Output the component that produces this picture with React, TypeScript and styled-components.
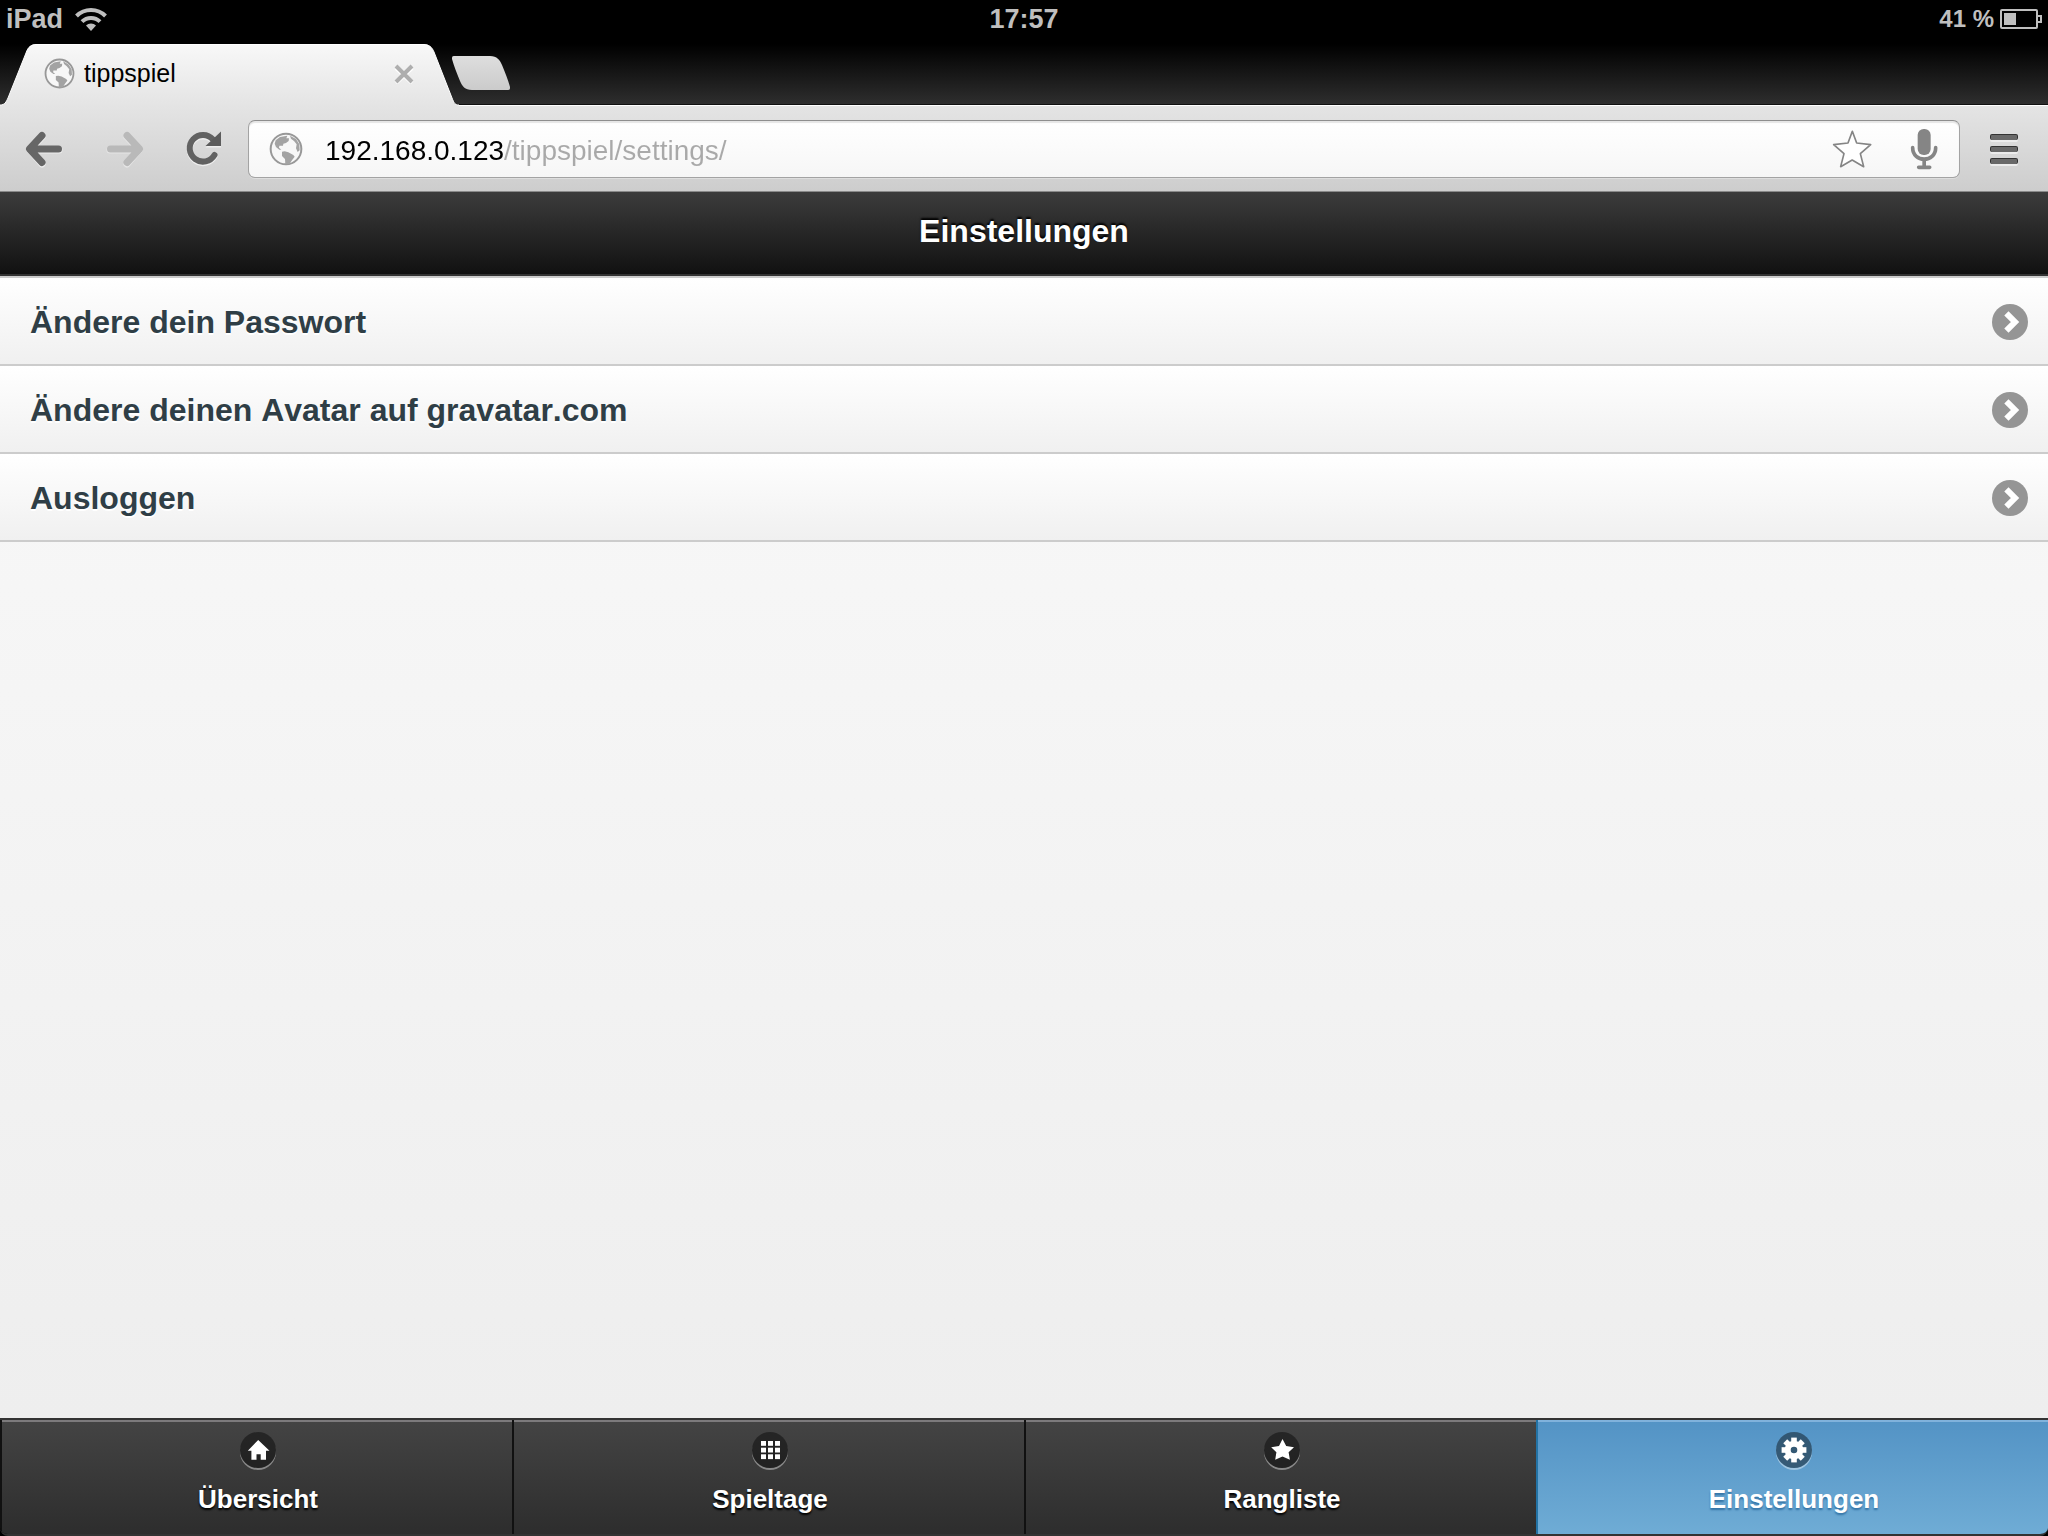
import React from "react";
import styled, { createGlobalStyle } from "styled-components";

const GlobalStyle = createGlobalStyle`
  *, *::before, *::after { box-sizing: border-box; }
  html, body { margin: 0; padding: 0; background: #000; }
  body {
    font-family: "Liberation Sans", Arial, Helvetica, sans-serif;
    font-kerning: none;
  }
  h1, ul { margin: 0; padding: 0; }
  button { margin: 0; padding: 0; border: 0; background: none; font: inherit; }
  a { text-decoration: none; }
  svg { display: block; flex: none; }
`;

const Page = styled.div`
  display: flex;
  flex-direction: column;
  min-height: 100vh;
  background: #000;
`;

const StatusBar = styled.div`
  display: grid;
  grid-template-columns: 1fr auto 1fr;
  align-items: center;
  height: 38px;
  padding: 0 6px;
  background: #000;
  color: #bfbfbf;
  font-size: 27px;
  font-weight: bold;
`;

const StatusGroup = styled.div<{ $end?: boolean }>`
  display: flex;
  align-items: center;
  justify-content: ${(p) => (p.$end ? "flex-end" : "flex-start")};
  gap: ${(p) => (p.$end ? "6px" : "12px")};
`;

const BatteryText = styled.span`
  font-size: 24px;
`;

const TabStrip = styled.div`
  display: flex;
  align-items: flex-start;
  height: 67px;
  padding-top: 6px;
  background: linear-gradient(#000 6px, #2e2e2e 66px, #111 66px);
`;

const Tab = styled.div`
  position: relative;
  display: flex;
  align-items: center;
  width: 458px;
  height: 61px;
  padding: 0 42px 3px 44px;
`;

const TabShape = styled.svg`
  position: absolute;
  left: 0;
  top: 0;
`;

const TabLink = styled.a`
  position: relative;
  display: flex;
  flex: 1;
  align-items: center;
  gap: 9px;
  color: #000;
  font-size: 25px;
`;

const TabClose = styled.button`
  position: relative;
  padding: 2px 2px 0 0;
`;

const NewTab = styled.button`
  margin: 11px 0 0 -8px;
`;

const Toolbar = styled.div`
  display: flex;
  align-items: center;
  padding: 14px 0 13px 4px;
  border-top: 1px solid #fff;
  border-bottom: 1px solid #8a8a8a;
  background: linear-gradient(#e4e4e4, #cdcdcd);
`;

const ToolButton = styled.button<{ $wide?: boolean }>`
  display: flex;
  align-items: center;
  justify-content: center;
  width: ${(p) => (p.$wide ? "88px" : "80px")};
  height: 58px;
`;

const Omnibox = styled.form`
  display: flex;
  flex: 1;
  align-items: center;
  height: 58px;
  margin-left: 4px;
  padding-left: 20px;
  border: 1px solid #a3a3a3;
  border-top-color: #8e8e8e;
  border-radius: 7px;
  background: linear-gradient(#fff, #f6f6f6);
  box-shadow: inset 0 2px 1px #e6e6e6, 0 1px 0 #dedede;
`;

const UrlInput = styled.input`
  flex: 1;
  min-width: 0;
  margin-left: 22px;
  padding: 4px 0 0;
  border: 0;
  outline: 0;
  color: #000;
  font-family: inherit;
  font-size: 28px;
  line-height: 40px;
  background: linear-gradient(90deg, #000 179px, #a9a9a9 179px);
  background-clip: text;
  -webkit-background-clip: text;
  -webkit-text-fill-color: transparent;
`;

const OmniButton = styled.button`
  display: flex;
  align-items: center;
  justify-content: center;
  width: 72px;
  height: 56px;
  padding-left: 2px;
`;

const Header = styled.header`
  padding: 20px 30px 24px;
  border-bottom: 2px solid #333;
  background: linear-gradient(#3c3c3c, #111);
`;

const Title = styled.h1`
  color: #fff;
  font-size: 32px;
  line-height: 38px;
  text-align: center;
  text-shadow: 0 -2px 2px #000;
`;

const Content = styled.main`
  flex: 1;
  background: linear-gradient(#f9f9f9, #eeeeee);
`;

const List = styled.ul`
  list-style: none;
  border-top: 2px solid #ccc;
`;

const Item = styled.li`
  border-bottom: 2px solid #ccc;
  background: linear-gradient(#fff, #f0f0f0);
`;

const ItemLink = styled.a`
  display: flex;
  align-items: center;
  justify-content: space-between;
  padding: 24px 20px 22px 30px;
  color: #2f3e46;
  font-size: 32px;
  font-weight: bold;
  line-height: 40px;
  text-shadow: 0 2px 0 #fff;
`;

const Footer = styled.footer`
  overflow: hidden;
  border: solid #333;
  border-width: 2px 0;
  border-radius: 0 0 8px 8px;
`;

const NavBar = styled.nav`
  display: grid;
  grid-template-columns: repeat(4, 1fr);
`;

const NavLink = styled.a<{ $active?: boolean }>`
  display: flex;
  flex-direction: column;
  align-items: center;
  gap: 15px;
  padding: 12px 0 19px 2px;
  border-left: 2px solid ${(p) => (p.$active ? "#2373a5" : "#111")};
  background: ${(p) =>
    p.$active
      ? "linear-gradient(#5393c5, #6facd5)"
      : "linear-gradient(#444, #2d2d2d)"};
  box-shadow: inset 0 2px 0 ${(p) => (p.$active ? "#80b2dc" : "#7c7a7c")};
  color: #fff;
  font-size: 26px;
  font-weight: bold;
  line-height: 32px;
  text-shadow: 0 2px 2px ${(p) => (p.$active ? "#3373a5" : "#000")};
`;

const NavIcon = styled.span`
  width: 36px;
  height: 36px;
  border-radius: 50%;
  background: rgba(0, 0, 0, 0.42);
  box-shadow: 0 2px 0 rgba(255, 255, 255, 0.4);
`;

const Globe = ({ size }: { size: number }) => (
  <svg width={size} height={size} viewBox="777 67 102 102" aria-hidden="true">
    <circle cx="828" cy="118" r="46" fill="#f7f7f7" stroke="#989898" strokeWidth="6" />
    <path fill="#a3a3a3" d="M797 92 L810 82 L832 78 L829 86 L837 86 L836 94 L828 100 L820 102 L819 108 L808 108 L807 114 L814 120 L808 120 L798 112 L794 102 Z" />
    <path fill="#a3a3a3" d="M816 126 L824 125 L835 128 L850 136 L854 141 L846 152 L838 164 L826 164 L825 148 L816 139 Z" />
    <path fill="#a3a3a3" d="M840 78 L858 88 L868 104 L869 122 L863 127 L858 116 L860 104 L852 94 L843 87 Z" />
  </svg>
);

const WifiIcon = () => (
  <svg width="32" height="24" viewBox="0 0 32 24" aria-hidden="true">
    <g fill="none" stroke="#bfbfbf" strokeWidth="4">
      <path d="M1.5 9 A20.5 20.5 0 0 1 30.5 9" />
      <path d="M7 14.7 A12.8 12.8 0 0 1 25 14.7" />
    </g>
    <path d="M16 24 L11 18.6 A7 7 0 0 1 21 18.6 Z" fill="#bfbfbf" />
  </svg>
);

const BatteryIcon = () => (
  <svg width="42" height="20" viewBox="0 0 42 20" aria-hidden="true">
    <rect x="1" y="1" width="36" height="18" rx="1" fill="none" stroke="#bfbfbf" strokeWidth="2" />
    <rect x="4" y="4" width="12" height="12" fill="#bfbfbf" />
    <path d="M38 7 H41 V13 H38" fill="none" stroke="#bfbfbf" strokeWidth="2" />
  </svg>
);

const Chevron = () => (
  <svg width="36" height="36" viewBox="0 0 36 36" aria-hidden="true">
    <circle cx="18" cy="18" r="18" fill="#959595" />
    <path d="M14.4 9.4 L23 18 L14.4 26.6" fill="none" stroke="#fff" strokeWidth="6" />
  </svg>
);

type IconName = "home" | "grid" | "star" | "gear";

const glyphs: Record<IconName, React.ReactNode> = {
  home: <path d="M18.2 8 L29.500 18.800 H26 V27.700 H20.7 V22.3 H16.5 V27.700 H11.4 V18.800 H7.8 Z" />,
  grid: (
    <>
      {[9, 16, 23].map((x) =>
        [9, 15.7, 22.3].map((y) => <rect key={`${x}-${y}`} x={x} y={y} width="5" height="4.8" />)
      )}
    </>
  ),
  star: <path d="M18.5 7 L22.2 14 L30 15.2 L24.6 20.2 L25.9 27.8 L18.5 24.4 L11.2 27.8 L12.4 20.2 L7.2 15.2 L15 14 Z" />,
  gear: (
    <>
      <circle cx="18" cy="18" r="6.3" fill="none" stroke="#fff" strokeWidth="6" />
      {[0, 45, 90, 135, 180, 225, 270, 315].map((a) => (
        <rect key={a} x="15.2" y="5.6" width="5.6" height="5" transform={`rotate(${a} 18 18)`} />
      ))}
    </>
  ),
};

const settings = [
  { label: "Ändere dein Passwort", href: "#passwort" },
  { label: "Ändere deinen Avatar auf gravatar.com", href: "#avatar" },
  { label: "Ausloggen", href: "#logout" },
];

const sections: { label: string; icon: IconName; active?: boolean }[] = [
  { label: "Übersicht", icon: "home" },
  { label: "Spieltage", icon: "grid" },
  { label: "Rangliste", icon: "star" },
  { label: "Einstellungen", icon: "gear", active: true },
];

export default function App() {
  return (
    <Page>
      <GlobalStyle />
      <StatusBar>
        <StatusGroup>
          <span>iPad</span>
          <WifiIcon />
        </StatusGroup>
        <span>17:57</span>
        <StatusGroup $end>
          <BatteryText>41 %</BatteryText>
          <BatteryIcon />
        </StatusGroup>
      </StatusBar>

      <TabStrip>
        <Tab>
          <TabShape width="460" height="62" viewBox="0 0 460 62" aria-hidden="true">
            <defs>
              <linearGradient id="tabFill" x1="0" y1="0" x2="0" y2="1">
                <stop offset="0" stopColor="#f8f8f8" />
                <stop offset="1" stopColor="#e4e4e4" />
              </linearGradient>
            </defs>
            <path d="M0 62 V61 C5 61 6 58 8 54 L26 9 C28 3 31 0 37 0 H423 C429 0 432 3 434 8 L452 54 C454 59 455 61 459 61 V62 Z" fill="url(#tabFill)" />
            <path d="M0 61 C5 61 6 58 8 54 L26 9 C28 3 31 0.5 37 0.5 H423 C429 0.5 432 3 434 8 L452 54 C454 59 455 61 459 61" fill="none" stroke="#fff" />
          </TabShape>
          <TabLink href="#tippspiel">
            <Globe size={31} />
            tippspiel
          </TabLink>
          <TabClose type="button" aria-label="Tab schließen">
            <svg width="20" height="20" viewBox="0 0 20 20">
              <path d="M2 4 L18 19 M18 4 L2 19" stroke="#fff" strokeWidth="4" />
              <path d="M2 2 L18 18 M18 2 L2 18" stroke="#aeaeae" strokeWidth="4" />
            </svg>
          </TabClose>
        </Tab>
        <NewTab type="button" aria-label="Neuer Tab">
          <svg width="62" height="36" viewBox="0 0 62 36">
            <defs>
              <linearGradient id="newTabFill" x1="0" y1="0" x2="0" y2="1">
                <stop offset="0" stopColor="#dedede" />
                <stop offset="1" stopColor="#cbcbcb" />
              </linearGradient>
            </defs>
            <path d="M4 1 H40 C47 1 50 5 52 10 C55 17 58 25 60 32 C60 34 60 35 58 35 H22 C15 35 12 31 10 26 C7 19 4 11 2 4 C2 2 2 1 4 1 Z" fill="url(#newTabFill)" />
          </svg>
        </NewTab>
      </TabStrip>

      <Toolbar>
        <ToolButton type="button" aria-label="Zurück">
          <svg width="80" height="58" viewBox="4 120 80 58">
            <g fill="none" strokeWidth="7" strokeLinecap="round" strokeLinejoin="round">
              <path d="M42 137 L30 150 L42 164 M30 150 H59" stroke="#eee" />
              <path d="M42 135.5 L29.5 149 L42 162.5 M30 149 H58.5" stroke="#666" />
            </g>
          </svg>
        </ToolButton>
        <ToolButton type="button" aria-label="Vor">
          <svg width="80" height="58" viewBox="84 120 80 58">
            <g fill="none" strokeWidth="7" strokeLinecap="round" strokeLinejoin="round">
              <path d="M127 137 L139 150 L127 164 M139 150 H110" stroke="#e6e6e6" />
              <path d="M127 135.5 L139.5 149 L127 162.5 M139 149 H110.5" stroke="#b9b9b9" />
            </g>
          </svg>
        </ToolButton>
        <ToolButton type="button" aria-label="Neu laden">
          <svg width="80" height="58" viewBox="164 120 80 58">
            <g transform="translate(0 1.5)" stroke="#eee" fill="none">
              <path d="M214.5 155 A13.3 13.3 0 1 1 213 139.5" strokeWidth="6" strokeLinecap="round" />
              <path d="M221 132 V146 H205.5 Z" fill="#eee" stroke="none" />
            </g>
            <path d="M214.5 155 A13.3 13.3 0 1 1 213 139.5" fill="none" stroke="#626262" strokeWidth="6" strokeLinecap="round" />
            <path d="M221 131.5 V146 H205.5 Z" fill="#5c5c5c" />
          </svg>
        </ToolButton>
        <Omnibox onSubmit={(e) => e.preventDefault()}>
          <Globe size={34} />
          <UrlInput aria-label="Adresse" defaultValue="192.168.0.123/tippspiel/settings/" spellCheck={false} />
          <OmniButton type="button" aria-label="Lesezeichen">
            <svg width="40" height="40" viewBox="37 57 120 120">
              <path d="M98 64 L111 99 L153 104 L122 131 L132 170 L97.5 150 L63 170 L73 131 L42 104 L85 99 Z" fill="#fff" stroke="#858585" strokeWidth="5" strokeLinejoin="round" />
            </svg>
          </OmniButton>
          <OmniButton type="button" aria-label="Spracheingabe">
            <svg width="30" height="42" viewBox="268 55 90 126">
              <rect x="294" y="58" width="39" height="78" rx="18" fill="#858585" />
              <path d="M279 114 C279 160 348 160 348 114" fill="none" stroke="#858585" strokeWidth="11" strokeLinecap="round" />
              <path d="M313.5 150 V172 M297 173 H330" stroke="#858585" strokeWidth="11" strokeLinecap="round" />
            </svg>
          </OmniButton>
        </Omnibox>
        <ToolButton type="button" $wide aria-label="Menü">
          <svg width="28" height="34" viewBox="0 0 28 34">
            {[2, 14, 26].map((y) => (
              <g key={y}>
                <rect x="0" y={y + 1} width="28" height="7" rx="2" fill="#ececec" />
                <rect x="0" y={y} width="28" height="6" rx="2" fill="#333" />
                <rect x="1" y={y + 1} width="26" height="5" rx="1" fill="#696969" />
              </g>
            ))}
          </svg>
        </ToolButton>
      </Toolbar>

      <Header>
        <Title>Einstellungen</Title>
      </Header>

      <Content>
        <List>
          {settings.map((s) => (
            <Item key={s.label}>
              <ItemLink href={s.href}>
                {s.label}
                <Chevron />
              </ItemLink>
            </Item>
          ))}
        </List>
      </Content>

      <Footer>
        <NavBar>
          {sections.map((s) => (
            <NavLink key={s.label} href={`#${s.icon}`} $active={s.active} aria-current={s.active ? "page" : undefined}>
              <NavIcon>
                <svg width="36" height="36" viewBox="0 0 36 36" fill="#fff" aria-hidden="true">
                  {glyphs[s.icon]}
                </svg>
              </NavIcon>
              {s.label}
            </NavLink>
          ))}
        </NavBar>
      </Footer>
    </Page>
  );
}
